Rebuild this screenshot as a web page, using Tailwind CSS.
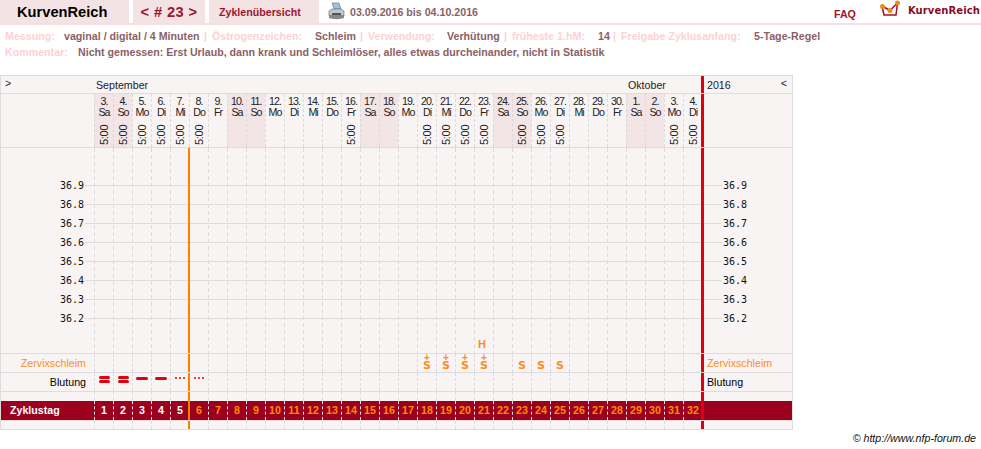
<!DOCTYPE html>
<html lang="de">
<head>
  <meta charset="UTF-8" />
  <meta name="viewport" content="width=device-width, initial-scale=1.0"/>
  <title>KurvenReich Zyklus 23</title>
  <script src="https://cdn.jsdelivr.net/npm/@tailwindcss/browser@4"></script>
</head>
<body class="bg-white font-['Liberation_Sans',Arial,sans-serif] text-[10.67px] leading-none">

  <!-- Top tabs -->
  <div class="h-[25px] border-b-2 border-[#f3e0e3] flex relative">
    <div class="w-[129px] h-[23px] bg-[#f3e3e5] pl-[17px] pt-[5px] text-[14.67px] font-bold text-black">KurvenReich</div>
    <div class="w-[72px] h-[23px] ml-[4px] bg-[#f3e3e5] text-center pt-[5px] text-[14.67px] font-bold text-[#a0142c] tracking-[0.4px]">&lt; # 23 &gt;</div>
    <div class="w-[110px] h-[23px] ml-[4px] bg-[#f3e3e5] pl-[10px] pt-[7px] font-bold text-[#a0142c]">Zyklenübersicht</div>
    <svg class="w-[17px] h-[18px] ml-[9px] mt-[2px]" viewBox="0 0 17 18">
      <path d="M4 1h7l2 6H6z" fill="#9fc0e4" stroke="#5f7f9f" stroke-width=".7"/>
      <path d="M1 9l3-2h9l3 2v5H1z" fill="#c4c6c8" stroke="#777" stroke-width=".7"/>
      <path d="M1 13h15v3c-4 1.500-11 1.500-15 0z" fill="#85898c"/>
      <rect x="4" y="11" width="9" height="2" fill="#555"/>
    </svg>
    <div class="ml-[5px] pt-[7px] font-bold text-[#8a5f66]">03.09.2016 bis 04.10.2016</div>
    <div class="ml-auto pt-[9px] font-bold text-[#a0142c]">FAQ</div>
    <svg class="w-[20px] h-[17px] ml-[24px]" viewBox="0 0 20 17">
      <path d="M2 6l2 9h12l1.500-12M2 6l8 4.500 7.500-7.500" fill="none" stroke="#a80c28" stroke-width="1.500"/>
      <circle cx="2.500" cy="6.500" r="2.500" fill="#f08a18"/>
      <circle cx="10" cy="10.500" r="2.500" fill="#f08a18"/>
      <circle cx="17.500" cy="3" r="2.500" fill="#f08a18"/>
    </svg>
    <div class="ml-[8px] mr-[1px] pt-[6px] font-['DejaVu_Sans',sans-serif] text-[10px] font-bold text-[#8a0c24] tracking-[0.1px]">KurvenReich</div>
  </div>

  <!-- Cycle info -->
  <div class="h-[50px] pl-[5px] pt-[6px] font-bold text-[#8a5f66]">
    <div class="flex h-[16px] whitespace-pre">
      <span class="text-[#fcd2d6] w-[59px]">Messung:</span><span class="w-[140px]">vaginal / digital / 4 Minuten</span><span class="text-[#fcd2d6] w-[8px]">|</span><span class="text-[#fcd2d6] w-[103px]">Östrogenzeichen:</span><span class="w-[45px]">Schleim</span><span class="text-[#fcd2d6] w-[8px]">|</span><span class="text-[#fcd2d6] w-[79px]">Verwendung:</span><span class="w-[57px]">Verhütung</span><span class="text-[#fcd2d6] w-[8px]">|</span><span class="text-[#fcd2d6] w-[86px]">früheste 1.hM:</span><span class="w-[15px]">14</span><span class="text-[#fcd2d6] w-[8px]">|</span><span class="text-[#fcd2d6] w-[133px]">Freigabe Zyklusanfang:</span><span>5-Tage-Regel</span>
    </div>
    <div class="flex whitespace-pre">
      <span class="text-[#fcd2d6] w-[73px]">Kommentar:</span><span>Nicht gemessen: Erst Urlaub, dann krank und Schleimlöser, alles etwas durcheinander, nicht in Statistik</span>
    </div>
  </div>

  <!-- Chart table -->
  <div class="w-[793px] h-[355px] border border-[#dedcdc] bg-[#f9f4f4] text-[#222]">
    <div class="h-[18px] border-b border-[#dedcdc] flex">
      <div class="w-[93px] pl-[4px] pt-[2px]">&gt;</div>
      <div class="w-[532px] pl-[2px] pt-[4px]">September</div>
      <div class="w-[76px] pt-[4px] pl-[2px]">Oktober</div>
      <div class="w-[91px] -ml-px border-l-[3px] border-[#e0000f] pl-[3px] pt-[4px] flex justify-between pr-[5px]"><span>2016</span><span class="-mt-[2px]">&lt;</span></div>
    </div>

    <div class="h-[54px] border-b border-[#dedcdc] flex">
      <div class="w-[93px]"></div>
      <div id="days" class="flex"></div>
      <div class="w-[91px] -ml-px border-l-[3px] border-[#e0000f]"></div>
    </div>

    <div class="h-[206px] border-b border-[#dedcdc]">
      <svg id="plot" class="block" width="791" height="205" viewBox="0 0 791 205"></svg>
    </div>

    <div class="h-[19px] border-b border-[#dedcdc] flex">
      <div class="w-[93px] pr-[8px] pt-[4px] text-right text-[#ff8c1a]">Zervixschleim</div>
      <div id="mucus" class="flex"></div>
      <div class="w-[91px] -ml-px border-l-[3px] border-[#e0000f] pl-[3px] pt-[4px] text-[#ff8c1a]">Zervixschleim</div>
    </div>

    <div class="h-[19px] border-b border-[#dedcdc] flex">
      <div class="w-[93px] pr-[8px] pt-[4px] text-right text-black">Blutung</div>
      <div id="bleeding" class="flex"></div>
      <div class="w-[91px] -ml-px border-l-[3px] border-[#e0000f] pl-[3px] pt-[4px] text-black">Blutung</div>
    </div>

    <div id="gapRow" class="h-[9px] flex"></div>

    <div class="h-[20px] border-b border-[#dedcdc] flex">
      <div class="w-[93px] bg-[#9c001f] pl-[9px] pt-[4px] font-bold text-white">Zyklustag</div>
      <div id="cycleDays" class="flex"></div>
      <div class="w-[91px] -ml-px border-l-[3px] border-[#e0000f] bg-[#9c001f]"></div>
    </div>

    <div id="endRow" class="h-[8px] flex"></div>
  </div>

  <div class="mt-[3px] pr-[5px] text-right italic text-[#111]">© http://www.nfp-forum.de</div>

  <script>
    const weekdays = ["Mo", "Di", "Mi", "Do", "Fr", "Sa", "So"];
    const temps = ["36.9", "36.8", "36.7", "36.6", "36.5", "36.4", "36.3", "36.2"];
    const measured = [0, 1, 2, 3, 4, 5, 13, 17, 18, 19, 20, 22, 23, 24, 30, 31];
    const COUNT = 32;

    // left edge of each day column: dashed, except the orange line on 8. Do
    function cellClass(i) {
      if (i === 5) return "w-[20px] -ml-px border-l-2 border-[#ff8000]";
      return "w-[19px] border-l border-dashed border-[#dcdada]";
    }

    const days = document.getElementById("days");
    for (let i = 0; i < COUNT; i++) {
      const date = i < 28 ? i + 3 : i - 27;
      const weekday = weekdays[(5 + i) % 7];
      const weekend = weekday === "Sa" || weekday === "So";
      const shade = weekend ? " bg-[#f3e4e6]" : "";
      const time = measured.includes(i) ? '<div class="mt-[8px] h-[21px] [writing-mode:vertical-rl] rotate-180 flex items-center justify-start pt-[1px] text-[11px] tracking-[-0.3px]">5:00</div>' : "";
      days.innerHTML += `<div class="w-[19px] border-l border-dashed border-[#dcdada] flex flex-col items-center pt-[2px] text-[10.67px] tracking-[-1px] leading-[10px]${shade}"><div>${date}.</div><div>${weekday}</div>${time}</div>`;
    }

    // plot area drawn as one svg, coordinates are page position minus (1, 148)
    let svg = "";
    for (let i = 0; i < COUNT; i++) {
      svg += `<line x1="${93.5 + 19 * i}" y1="0" x2="${93.5 + 19 * i}" y2="205" stroke="#dcdada" stroke-dasharray="4 3"/>`;
    }
    temps.forEach((t, i) => {
      const y = 37.5 + 19 * i;
      svg += `<line x1="84" y1="${y}" x2="721" y2="${y}" stroke="#dedcdc"/>`;
      svg += `<text x="59" y="${y + 3.5}" class="font-['DejaVu_Sans_Mono',monospace] text-[10px]" fill="#111">${t}</text>`;
      svg += `<text x="722" y="${y + 3.5}" class="font-['DejaVu_Sans_Mono',monospace] text-[10px]" fill="#111">${t}</text>`;
    });
    svg += `<rect x="187" y="0" width="2" height="205" fill="#ff8000"/>`;
    svg += `<rect x="700" y="0" width="3" height="205" fill="#e0000f"/>`;
    svg += `<text x="477" y="200" class="font-bold text-[11px]" fill="#ff8c1a">H</text>`;
    document.getElementById("plot").innerHTML = svg;

    const mucus = { 17: "+", 18: "+", 19: "+", 20: "+", 22: "", 23: "", 24: "" };
    const bar2 = '<div class="w-[11px] h-[3px] rounded-full bg-[#e0000f]"></div><div class="w-[11px] h-[3px] mt-[1px] rounded-full bg-[#e0000f]"></div>';
    const bar1 = '<div class="w-[12px] h-[3px] mt-[1px] rounded-full bg-[#e0000f]"></div>';
    const dots = '<div class="flex gap-[2px] mt-[1px]"><div class="w-[2px] h-[2px] rounded-full bg-[#e0000f]"></div><div class="w-[2px] h-[2px] rounded-full bg-[#e0000f]"></div><div class="w-[2px] h-[2px] rounded-full bg-[#e0000f]"></div></div>';
    const bleeding = [bar2, bar2, bar1, bar1, dots, dots];

    for (let i = 0; i < COUNT; i++) {
      const cls = cellClass(i);
      const lead = i === 0 ? '<div class="w-[93px]"></div>' : "";
      document.getElementById("gapRow").innerHTML += `${lead}<div class="${cls}"></div>`;
      document.getElementById("endRow").innerHTML += `${lead}<div class="${cls}"></div>`;

      let m = "";
      if (i in mucus) {
        m = `<div class="h-[6px] text-[10px] font-bold leading-[6px]">${mucus[i]}</div><div class="h-[9px] font-['DejaVu_Sans',sans-serif] text-[11px] font-bold leading-[9px]">S</div>`;
      }
      document.getElementById("mucus").innerHTML += `<div class="${cls} flex flex-col items-center pt-[1px] text-[#ff8c1a]">${m}</div>`;
      document.getElementById("bleeding").innerHTML += `<div class="${cls} flex flex-col items-center pt-[3px]">${bleeding[i] || ""}</div>`;

      const color = i < 5 ? "text-white" : "text-[#ff8c00]";
      const lineCls = i === 5 ? "w-[20px] -ml-px border-l-2 border-[#ff8000]" : "w-[19px] border-l border-dashed border-[#f3e0e3]";
      document.getElementById("cycleDays").innerHTML += `<div class="${lineCls} bg-[#9c001f] text-center pt-[4px] font-bold ${color}">${i + 1}</div>`;
    }
    ["gapRow", "endRow"].forEach(id => {
      document.getElementById(id).innerHTML += '<div class="w-[91px] -ml-px border-l-[3px] border-[#e0000f]"></div>';
    });
  </script>
</body>
</html>
